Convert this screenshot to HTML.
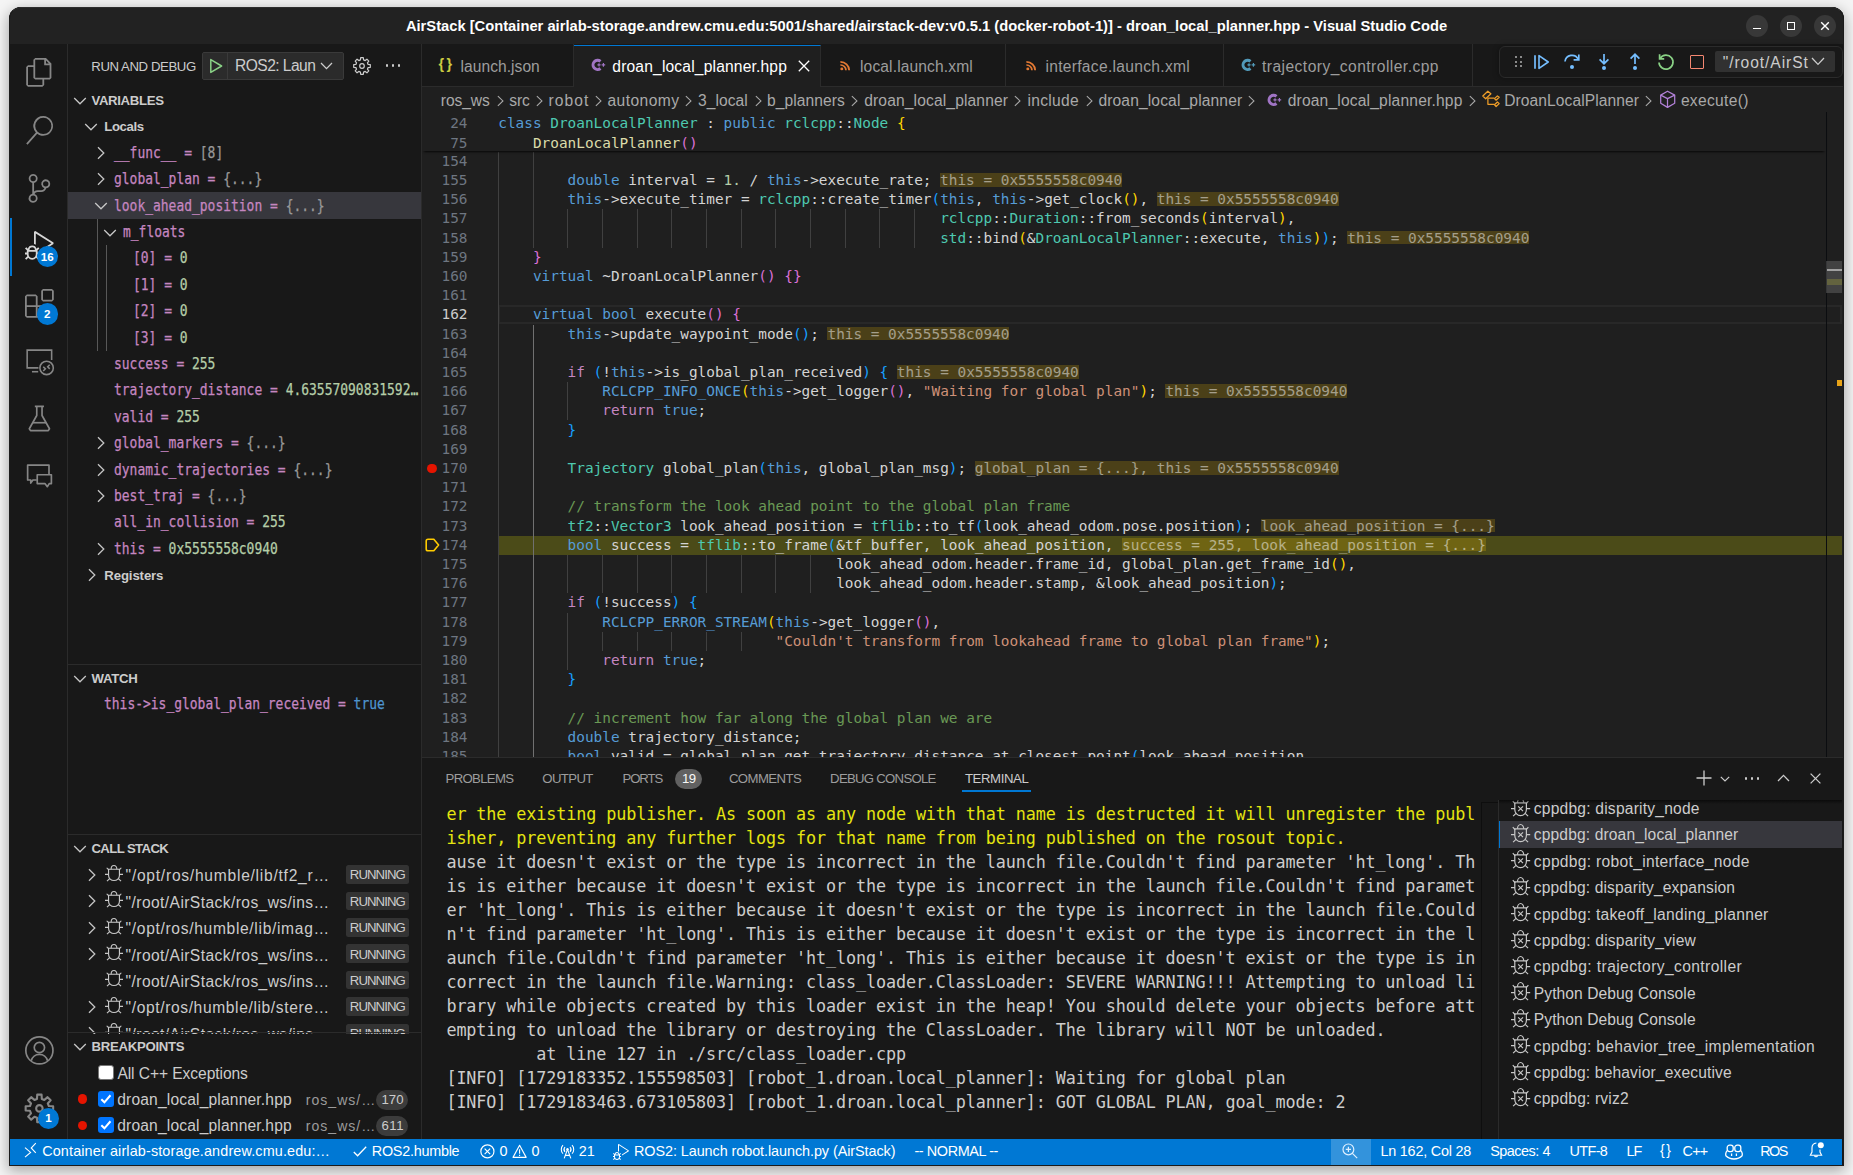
<!DOCTYPE html>
<html lang="en"><head><meta charset="utf-8"><title>AirStack - droan_local_planner.hpp - Visual Studio Code</title>
<style>
*{box-sizing:border-box;margin:0;padding:0}
html,body{width:1853px;height:1175px;overflow:hidden}
body{background:#f4f4f4;font-family:"Liberation Sans",sans-serif;color:#ccc;position:relative}
#shadow{position:absolute;left:9px;top:7px;width:1835px;height:1159px;border-radius:12px 12px 0 0;box-shadow:0 4px 14px 1px rgba(0,0,0,.32);background:#181818}
#win{position:absolute;left:9px;top:7px;width:1835px;height:1159px;border-radius:12px 12px 0 0;overflow:hidden;background:#181818}
#w{position:absolute;left:-9px;top:-7px;width:1853px;height:1175px}
.abs{position:absolute}
.t{position:absolute;white-space:pre;line-height:1}
svg{position:absolute;overflow:visible}
.ui{font-family:"Liberation Sans",sans-serif}
.mono{font-family:"DejaVu Sans Mono",monospace}
.smono{font-family:"Liberation Mono",monospace}

.sh{position:absolute;white-space:pre;font-size:13.2px;font-weight:700;color:#ccc;line-height:16px;letter-spacing:-.35px}
.vr{position:absolute;white-space:pre;font-family:"DejaVu Sans Mono",monospace;font-size:15px;line-height:16px;color:#c586c0;transform:scaleX(.8638);transform-origin:0 0;-webkit-text-stroke:.25px currentColor}
.vr i{font-style:normal;color:#999}
.vr b{font-weight:400;color:#b5cea8}
.vr u{text-decoration:none;color:#4e94ce}
.lb{position:absolute;white-space:pre;font-size:15.6px;line-height:20px;color:#ccc;letter-spacing:.2px}
.run{position:absolute;left:346px;width:63px;height:18.5px;background:#333;border-radius:2.5px;color:#ccc;font-size:13.2px;line-height:18.5px;text-align:center;letter-spacing:-.45px}
.cnt{position:absolute;height:21.6px;border-radius:11px;background:#3c3c3c;color:#ccc;font-size:13.2px;line-height:21.6px;text-align:center}

.cl{position:absolute;left:498.3px;height:19.2px;line-height:19.2px;font-family:"DejaVu Sans Mono",monospace;font-size:14.4px;white-space:pre;color:#d4d4d4}
.ln{position:absolute;left:422px;width:45.5px;text-align:right;height:19.2px;line-height:19.2px;font-family:"DejaVu Sans Mono",monospace;font-size:14.4px;color:#6e7681}
.k{color:#569cd6}.ty{color:#4ec9b0}.c{color:#c586c0}.s{color:#ce9178}.m{color:#6a9955}.n{color:#b5cea8}.f{color:#dcdcaa}
.b1{color:#ffd700}.b2{color:#da70d6}.b3{color:#179fff}
.iv{display:inline-block;height:13.8px;line-height:15.6px;vertical-align:baseline;margin-left:8.6px;background:rgba(255,200,0,.2);color:rgba(255,255,255,.5)}
.ig{position:absolute;width:1px;background:#404040}
.tab{position:absolute;top:44px;height:43px;border-right:1px solid #2b2b2b}
.tabl{position:absolute;white-space:pre;font-size:15.6px;line-height:20px;top:56.5px;color:#9d9d9d;letter-spacing:.12px}
.bc{position:absolute;white-space:pre;font-size:15.6px;line-height:20px;top:90.5px;color:#a9a9a9;letter-spacing:.1px}

.pt{position:absolute;white-space:pre;font-size:13.2px;line-height:16px;top:771.2px;color:#9d9d9d;letter-spacing:-.62px}
.tl{position:absolute;left:446.4px;white-space:pre;font-family:"DejaVu Sans Mono",monospace;font-size:16.8px;letter-spacing:-.114px;line-height:24px;height:24px;color:#ccc}
.tr{position:absolute;left:1534px;white-space:pre;font-size:15.6px;line-height:20px;color:#ccc;letter-spacing:.28px}

.st{position:absolute;white-space:pre;font-size:14.4px;line-height:18px;top:1142px;color:#fff;letter-spacing:.3px}
</style></head>
<body>
<div id="shadow"></div>
<div id="win"><div id="w">
<div class="abs" style="left:9px;top:7px;width:1835px;height:37px;background:#222222"></div>
<div class="t ui" id="title" style="left:9px;width:1835px;top:19.3px;text-align:center;font-weight:700;font-size:14.73px;color:#fff">AirStack [Container airlab-storage.andrew.cmu.edu:5001/shared/airstack-dev:v0.5.1 (docker-robot-1)] - droan_local_planner.hpp - Visual Studio Code</div>
<div class="abs" style="left:1746px;top:15px;width:22px;height:22px;border-radius:50%;background:#383838"></div>
<div class="abs" style="left:1753px;top:28px;width:8px;height:1.4px;background:#fff"></div>
<div class="abs" style="left:1780px;top:15px;width:22px;height:22px;border-radius:50%;background:#383838"></div>
<div class="abs" style="left:1787px;top:22px;width:8px;height:8px;border:1.3px solid #fff"></div>
<div class="abs" style="left:1814px;top:15px;width:22px;height:22px;border-radius:50%;background:#383838"></div>
<svg style="left:1821px;top:22px" width="8" height="8" viewBox="0 0 8 8"><path d="M0.2 0.2L7.8 7.8M7.8 0.2L0.2 7.8" stroke="#fff" stroke-width="1.4" fill="none"/></svg>
<div class="abs" style="left:9px;top:44px;width:59px;height:1095px;background:#181818;border-right:1px solid #2b2b2b"></div>
<div class="abs" style="left:68px;top:44px;width:354px;height:1095px;background:#181818;border-right:1px solid #2b2b2b"></div>
<div class="abs" style="left:422px;top:44px;width:1422px;height:713px;background:#1f1f1f"></div>
<div class="abs" style="left:422px;top:44px;width:1422px;height:43px;background:#181818;border-bottom:1px solid #2b2b2b"></div>
<div class="abs" style="left:422px;top:757px;width:1422px;height:382px;background:#181818;border-top:1px solid #2b2b2b"></div>
<div class="abs" style="left:10px;top:1139px;width:1832.3px;height:26px;background:#0078d4"></div>
<svg style="left:24.7px;top:58.4px" width="28.8" height="28.8" viewBox="0 0 24 24"><path fill="#868686" fill-rule="evenodd" d="M17.5 0h-9L7 1.5V6H2.5L1 7.5v15.07L2.5 24h12.07L16 22.57V18h4.7l1.3-1.43V4.5L17.5 0zm0 2.12l2.38 2.38H17.5V2.12zm-3 20.38h-12v-15H7v9.07L8.5 18h6v4.5zm6-6h-12v-15H16V6h4.5v10.5z"/></svg>
<svg style="left:24.7px;top:116.0px" width="28.8" height="28.8" viewBox="0 0 24 24"><path fill="#868686" fill-rule="evenodd" d="M15.25 0a8.25 8.25 0 0 0-6.18 13.72L1 22.88l1.12 1.12 8.05-9.12A8.251 8.251 0 1 0 15.25.01V0zm0 15a6.75 6.75 0 1 1 0-13.5 6.75 6.75 0 0 1 0 13.5z"/></svg>
<svg style="left:24.7px;top:173.6px" width="28.8" height="28.8" viewBox="0 0 24 24"><path fill="#868686" fill-rule="evenodd" d="M21.007 8.222A3.738 3.738 0 0 0 15.045 5.2a3.737 3.737 0 0 0 1.156 6.583 2.988 2.988 0 0 1-2.668 1.67h-2.99a4.456 4.456 0 0 0-2.989 1.165V7.4a3.737 3.737 0 1 0-1.494 0v9.117a3.776 3.776 0 1 0 1.816.099 2.99 2.99 0 0 1 2.668-1.667h2.99a4.484 4.484 0 0 0 4.223-3.039 3.736 3.736 0 0 0 3.25-3.687zM4.565 3.738a2.242 2.242 0 1 1 4.484 0 2.242 2.242 0 0 1-4.484 0zm4.484 16.441a2.242 2.242 0 1 1-4.484 0 2.242 2.242 0 0 1 4.484 0zm8.221-9.715a2.242 2.242 0 1 1 0-4.485 2.242 2.242 0 0 1 0 4.485z"/></svg>
<div class="abs" style="left:10px;top:218px;width:2.4px;height:57.6px;background:#0078d4"></div>
<svg style="left:24.7px;top:231.2px" width="28.8" height="28.8" viewBox="0 0 24 24"><path fill="#d7d7d7" fill-rule="evenodd" d="M10.94 13.5l-1.32 1.32a3.73 3.73 0 0 0-7.24 0L1.06 13.5 0 14.56l1.72 1.72-.22.22V18H0v1.5h1.5v.08c.077.489.214.966.41 1.42L0 22.94 1.06 24l1.65-1.65A4.308 4.308 0 0 0 6 24a4.31 4.31 0 0 0 3.29-1.65L10.94 24 12 22.94 10.09 21c.198-.464.336-.951.41-1.45v-.1H12V18h-1.5v-1.5l-.22-.22L12 14.56l-1.06-1.06zM6 13.5a2.25 2.25 0 0 1 2.25 2.25h-4.5A2.25 2.25 0 0 1 6 13.5zm3 6a3.33 3.33 0 0 1-3 3 3.33 3.33 0 0 1-3-3v-2.25h6v2.25zm14.76-9.9v1.26L13.5 17.37V15.6l8.5-5.37L9 2v9.46a5.07 5.07 0 0 0-1.5-.72V.63L8.64 0l15.12 9.6z"/></svg>
<div class="abs" style="left:36.5px;top:245.6px;width:21.5px;height:21.5px;border-radius:50%;background:#0078d4"></div><div class="t ui" style="left:32.3px;width:30px;text-align:center;top:250.5px;font-size:11.6px;font-weight:700;color:#fff">16</div>
<svg style="left:24.7px;top:288.8px" width="28.8" height="28.8" viewBox="0 0 24 24"><path fill="#868686" fill-rule="evenodd" d="M13.5 1.5L15 0h7.5L24 1.5V9l-1.5 1.5H15L13.5 9V1.5zm1.5 0V9h7.5V1.5H15zM0 15V6l1.5-1.5H9L10.5 6v7.5H18l1.5 1.5v7.5L18 24H1.5L0 22.5V15zm9-1.5V6H1.5v7.5H9zM9 15H1.5v7.5H9V15zm1.5 7.5H18V15h-7.5v7.5z"/></svg>
<div class="abs" style="left:36.5px;top:303.2px;width:21.5px;height:21.5px;border-radius:50%;background:#0078d4"></div><div class="t ui" style="left:32.3px;width:30px;text-align:center;top:308.2px;font-size:11.6px;font-weight:700;color:#fff">2</div>
<svg style="left:24.9px;top:347.00000000000006px" width="28.8" height="28.8" viewBox="0 0 24 24"><g stroke="#868686" stroke-width="1.3" fill="none"><path d="M11.2 17.4H1.8V2.6H22.2V10.8"/><path d="M5.8 20.6H11"/><circle cx="18" cy="17.4" r="5.6"/><path d="M15.2 16.4L17 18.2L15.2 20M20.6 14.8L18.9 16.5L20.6 18.2"/></g></svg>
<svg style="left:25.0px;top:404.40000000000003px" width="28.8" height="28.8" viewBox="0 0 24 24"><g stroke="#868686" stroke-width="1.4" fill="none" stroke-linejoin="round"><path d="M8.2 2H15.8M9.8 2V9.6L3.6 20.6L4.6 22.2H19.4L20.4 20.6L14.2 9.6V2"/><path d="M6.4 15.6H17.6"/></g></svg>
<svg style="left:24.9px;top:461.6px" width="28.8" height="28.8" viewBox="0 0 24 24"><g stroke="#868686" stroke-width="1.4" fill="none" stroke-linejoin="round"><path d="M9.8 15H6.6L4.8 17.6V15H2.2V2.6H20V10"/><path d="M10.2 10.6H22V18H20.2L18.6 20.6L16.6 18H10.2Z"/></g></svg>
<svg style="left:24.700000000000003px;top:1036.1999999999998px" width="28.8" height="28.8" viewBox="0 0 24 24"><g stroke="#868686" stroke-width="1.4" fill="none"><circle cx="12" cy="12" r="11.3"/><circle cx="12" cy="9.6" r="4.3"/><path d="M5.2 20.6A7 7 0 0 1 18.8 20.6"/></g></svg>
<svg style="left:24.700000000000003px;top:1094.3999999999999px" width="28.8" height="28.8" viewBox="0 0 24 24"><g stroke="#868686" stroke-width="1.75" fill="none" stroke-linejoin="round"><path d="M10.19 0.54L13.81 0.54L14.01 4.15L16.12 5.03L18.82 2.62L21.38 5.18L18.97 7.88L19.85 9.99L23.46 10.19L23.46 13.81L19.85 14.01L18.97 16.12L21.38 18.82L18.82 21.38L16.12 18.97L14.01 19.85L13.81 23.46L10.19 23.46L9.99 19.85L7.88 18.97L5.18 21.38L2.62 18.82L5.03 16.12L4.15 14.01L0.54 13.81L0.54 10.19L4.15 9.99L5.03 7.88L2.62 5.18L5.18 2.62L7.88 5.03L9.99 4.15Z"/><circle cx="12" cy="12" r="2.7"/></g></svg>
<div class="abs" style="left:37.9px;top:1107.5px;width:21.5px;height:21.5px;border-radius:50%;background:#0078d4"></div><div class="t ui" style="left:33.6px;width:30px;text-align:center;top:1112.4px;font-size:11.6px;font-weight:700;color:#fff">1</div>
<div class="t ui" style="left:91.3px;top:60px;font-size:13.2px;color:#ccc;letter-spacing:-.42px">RUN AND DEBUG</div>
<div class="abs" style="left:202px;top:52px;width:142px;height:27.6px;background:#2b2b2b;border:1px solid #3a3a3a;border-radius:2px"></div>
<div class="abs" style="left:227px;top:53px;width:1px;height:25.6px;background:#3a3a3a"></div>
<svg style="left:209px;top:58px" width="15" height="16" viewBox="0 0 15 16"><path d="M1.8 1.6L12.6 8L1.8 14.4Z" stroke="#89d185" stroke-width="1.5" fill="none" stroke-linejoin="round"/></svg>
<div class="t ui" style="left:235px;top:57.8px;font-size:15.6px;color:#ccc;letter-spacing:-.55px">ROS2: Laun</div>
<svg style="left:320px;top:62px" width="13" height="8" viewBox="0 0 13 8"><path d="M1 1L6.5 6.6L12 1" stroke="#ccc" stroke-width="1.3" fill="none"/></svg>
<svg style="left:353px;top:56.5px" width="18" height="18" viewBox="0 0 18 18"><g stroke="#ccc" stroke-width="1.2" fill="none" stroke-linejoin="round"><path d="M7.69 0.70L10.31 0.70L10.57 2.90L12.21 3.58L13.94 2.20L15.80 4.06L14.42 5.79L15.10 7.43L17.30 7.69L17.30 10.31L15.10 10.57L14.42 12.21L15.80 13.94L13.94 15.80L12.21 14.42L10.57 15.10L10.31 17.30L7.69 17.30L7.43 15.10L5.79 14.42L4.06 15.80L2.20 13.94L3.58 12.21L2.90 10.57L0.70 10.31L0.70 7.69L2.90 7.43L3.58 5.79L2.20 4.06L4.06 2.20L5.79 3.58L7.43 2.90Z"/><circle cx="9" cy="9" r="2.3"/></g></svg>
<div class="abs" style="left:385.5px;top:64.2px;width:2.4px;height:2.4px;border-radius:50%;background:#ccc"></div>
<div class="abs" style="left:391.7px;top:64.2px;width:2.4px;height:2.4px;border-radius:50%;background:#ccc"></div>
<div class="abs" style="left:397.9px;top:64.2px;width:2.4px;height:2.4px;border-radius:50%;background:#ccc"></div>
<svg style="left:72.7px;top:96.8px" width="14" height="8" viewBox="0 0 14 8"><path d="M1.2 1L7 6.8L12.8 1" stroke="#c5c5c5" stroke-width="1.3" fill="none"/></svg>
<div class="t ui" style="left:91.4px;top:93.1px;font-size:13.2px;line-height:16px;color:#ccc;letter-spacing:-0.329px;font-weight:700;">VARIABLES</div>
<div class="abs" style="left:68px;top:192.4px;width:353px;height:26.4px;background:#37373d"></div>
<div class="abs" style="left:97px;top:218.8px;width:1px;height:132.0px;background:#585858"></div>
<div class="abs" style="left:106px;top:245.2px;width:1px;height:105.6px;background:#585858"></div>
<svg style="left:84px;top:122.9px" width="14" height="8" viewBox="0 0 14 8"><path d="M1.2 1L7 6.8L12.8 1" stroke="#c5c5c5" stroke-width="1.3" fill="none"/></svg>
<div class="t ui" style="left:104.3px;top:119.8px;font-size:13.2px;font-weight:700;color:#ccc;letter-spacing:-.4px">Locals</div>
<svg style="left:97px;top:145.8px" width="8" height="14" viewBox="0 0 8 14"><path d="M1 1.2L6.8 7L1 12.8" stroke="#c5c5c5" stroke-width="1.3" fill="none"/></svg>
<div class="vr" style="left:114px;top:144.8px">__func__ = <i>[8]</i></div>
<svg style="left:97px;top:172.2px" width="8" height="14" viewBox="0 0 8 14"><path d="M1 1.2L6.8 7L1 12.8" stroke="#c5c5c5" stroke-width="1.3" fill="none"/></svg>
<div class="vr" style="left:114px;top:171.2px">global_plan = <i>{...}</i></div>
<svg style="left:94px;top:202.1px" width="14" height="8" viewBox="0 0 14 8"><path d="M1.2 1L7 6.8L12.8 1" stroke="#c5c5c5" stroke-width="1.3" fill="none"/></svg>
<div class="vr" style="left:114px;top:197.6px">look_ahead_position = <i>{...}</i></div>
<svg style="left:103px;top:228.5px" width="14" height="8" viewBox="0 0 14 8"><path d="M1.2 1L7 6.8L12.8 1" stroke="#c5c5c5" stroke-width="1.3" fill="none"/></svg>
<div class="vr" style="left:123.3px;top:224.0px">m_floats</div>
<div class="vr" style="left:133px;top:250.4px">[0] = <b>0</b></div>
<div class="vr" style="left:133px;top:276.8px">[1] = <b>0</b></div>
<div class="vr" style="left:133px;top:303.2px">[2] = <b>0</b></div>
<div class="vr" style="left:133px;top:329.6px">[3] = <b>0</b></div>
<div class="vr" style="left:114px;top:356.0px">success = <b>255</b></div>
<div class="vr" style="left:114px;top:382.4px">trajectory_distance = <b>4.63557090831592…</b></div>
<div class="vr" style="left:114px;top:408.8px">valid = <b>255</b></div>
<svg style="left:97px;top:436.19999999999993px" width="8" height="14" viewBox="0 0 8 14"><path d="M1 1.2L6.8 7L1 12.8" stroke="#c5c5c5" stroke-width="1.3" fill="none"/></svg>
<div class="vr" style="left:114px;top:435.2px">global_markers = <i>{...}</i></div>
<svg style="left:97px;top:462.6px" width="8" height="14" viewBox="0 0 8 14"><path d="M1 1.2L6.8 7L1 12.8" stroke="#c5c5c5" stroke-width="1.3" fill="none"/></svg>
<div class="vr" style="left:114px;top:461.6px">dynamic_trajectories = <i>{...}</i></div>
<svg style="left:97px;top:489.0px" width="8" height="14" viewBox="0 0 8 14"><path d="M1 1.2L6.8 7L1 12.8" stroke="#c5c5c5" stroke-width="1.3" fill="none"/></svg>
<div class="vr" style="left:114px;top:488.0px">best_traj = <i>{...}</i></div>
<div class="vr" style="left:114px;top:514.4px">all_in_collision = <b>255</b></div>
<svg style="left:97px;top:541.8px" width="8" height="14" viewBox="0 0 8 14"><path d="M1 1.2L6.8 7L1 12.8" stroke="#c5c5c5" stroke-width="1.3" fill="none"/></svg>
<div class="vr" style="left:114px;top:540.8px">this = <b>0x5555558c0940</b></div>
<svg style="left:88px;top:568.1999999999999px" width="8" height="14" viewBox="0 0 8 14"><path d="M1 1.2L6.8 7L1 12.8" stroke="#c5c5c5" stroke-width="1.3" fill="none"/></svg>
<div class="t ui" style="left:104.3px;top:568.6px;font-size:13.2px;font-weight:700;color:#ccc;letter-spacing:-.12px">Registers</div>
<div class="abs" style="left:68px;top:664.2px;width:353px;height:1px;background:#2b2b2b"></div>
<svg style="left:72.7px;top:674.8px" width="14" height="8" viewBox="0 0 14 8"><path d="M1.2 1L7 6.8L12.8 1" stroke="#c5c5c5" stroke-width="1.3" fill="none"/></svg>
<div class="t ui" style="left:91.4px;top:671.1px;font-size:13.2px;line-height:16px;color:#ccc;letter-spacing:-0.219px;font-weight:700;">WATCH</div>
<div class="vr" style="left:104.3px;top:696.4px">this-&gt;is_global_plan_received = <u>true</u></div>
<div class="abs" style="left:68px;top:834.2px;width:353px;height:1px;background:#2b2b2b"></div>
<svg style="left:72.7px;top:844.8px" width="14" height="8" viewBox="0 0 14 8"><path d="M1.2 1L7 6.8L12.8 1" stroke="#c5c5c5" stroke-width="1.3" fill="none"/></svg>
<div class="t ui" style="left:91.4px;top:841.1px;font-size:13.2px;line-height:16px;color:#ccc;letter-spacing:-0.615px;font-weight:700;">CALL STACK</div>
<div class="abs" style="left:68px;top:861px;width:353px;height:172.5px;overflow:hidden"><div class="abs" style="left:-68px;top:-861px;width:500px;height:1175px">
<svg style="left:87.9px;top:867.8px" width="8" height="14" viewBox="0 0 8 14"><path d="M1 1.2L6.8 7L1 12.8" stroke="#c5c5c5" stroke-width="1.3" fill="none"/></svg>
<svg style="left:104.9px;top:864.8px" width="18" height="16.3" viewBox="0 0 19.2 18.4" preserveAspectRatio="none"><g stroke="#c8c8c8" stroke-width="1.2" fill="none"><path d="M6.5 4.8A3.1 4.3 0 0 1 12.7 4.8"/><path d="M3.8 4.8H15.4V11.8A5.8 5.8 0 0 1 3.8 11.8Z"/><path d="M0 10.6H3.8M15.4 10.6H19.2M4.2 5.8L1.8 3.1M15 5.8L17.4 3.1M5 15.4L2.1 18.2M14.2 15.4L17.1 18.2"/></g></svg>
<div class="t ui" style="left:125.6px;top:866.3px;font-size:15.6px;line-height:20px;color:#ccc;letter-spacing:0.746px;">"/opt/ros/humble/lib/tf2_r…</div>
<div class="run" style="top:865.2px"></div>
<div class="t ui" style="left:349.8px;top:867.3px;font-size:13.2px;line-height:16px;color:#ccc;letter-spacing:-0.924px;">RUNNING</div>
<svg style="left:87.9px;top:894.1999999999999px" width="8" height="14" viewBox="0 0 8 14"><path d="M1 1.2L6.8 7L1 12.8" stroke="#c5c5c5" stroke-width="1.3" fill="none"/></svg>
<svg style="left:104.9px;top:891.2px" width="18" height="16.3" viewBox="0 0 19.2 18.4" preserveAspectRatio="none"><g stroke="#c8c8c8" stroke-width="1.2" fill="none"><path d="M6.5 4.8A3.1 4.3 0 0 1 12.7 4.8"/><path d="M3.8 4.8H15.4V11.8A5.8 5.8 0 0 1 3.8 11.8Z"/><path d="M0 10.6H3.8M15.4 10.6H19.2M4.2 5.8L1.8 3.1M15 5.8L17.4 3.1M5 15.4L2.1 18.2M14.2 15.4L17.1 18.2"/></g></svg>
<div class="t ui" style="left:125.6px;top:892.7px;font-size:15.6px;line-height:20px;color:#ccc;letter-spacing:0.415px;">"/root/AirStack/ros_ws/ins…</div>
<div class="run" style="top:891.6px"></div>
<div class="t ui" style="left:349.8px;top:893.7px;font-size:13.2px;line-height:16px;color:#ccc;letter-spacing:-0.924px;">RUNNING</div>
<svg style="left:87.9px;top:920.5999999999999px" width="8" height="14" viewBox="0 0 8 14"><path d="M1 1.2L6.8 7L1 12.8" stroke="#c5c5c5" stroke-width="1.3" fill="none"/></svg>
<svg style="left:104.9px;top:917.6px" width="18" height="16.3" viewBox="0 0 19.2 18.4" preserveAspectRatio="none"><g stroke="#c8c8c8" stroke-width="1.2" fill="none"><path d="M6.5 4.8A3.1 4.3 0 0 1 12.7 4.8"/><path d="M3.8 4.8H15.4V11.8A5.8 5.8 0 0 1 3.8 11.8Z"/><path d="M0 10.6H3.8M15.4 10.6H19.2M4.2 5.8L1.8 3.1M15 5.8L17.4 3.1M5 15.4L2.1 18.2M14.2 15.4L17.1 18.2"/></g></svg>
<div class="t ui" style="left:125.6px;top:919.1px;font-size:15.6px;line-height:20px;color:#ccc;letter-spacing:0.672px;">"/opt/ros/humble/lib/imag…</div>
<div class="run" style="top:918.0px"></div>
<div class="t ui" style="left:349.8px;top:920.1px;font-size:13.2px;line-height:16px;color:#ccc;letter-spacing:-0.924px;">RUNNING</div>
<svg style="left:87.9px;top:946.9999999999999px" width="8" height="14" viewBox="0 0 8 14"><path d="M1 1.2L6.8 7L1 12.8" stroke="#c5c5c5" stroke-width="1.3" fill="none"/></svg>
<svg style="left:104.9px;top:944.0px" width="18" height="16.3" viewBox="0 0 19.2 18.4" preserveAspectRatio="none"><g stroke="#c8c8c8" stroke-width="1.2" fill="none"><path d="M6.5 4.8A3.1 4.3 0 0 1 12.7 4.8"/><path d="M3.8 4.8H15.4V11.8A5.8 5.8 0 0 1 3.8 11.8Z"/><path d="M0 10.6H3.8M15.4 10.6H19.2M4.2 5.8L1.8 3.1M15 5.8L17.4 3.1M5 15.4L2.1 18.2M14.2 15.4L17.1 18.2"/></g></svg>
<div class="t ui" style="left:125.6px;top:945.5px;font-size:15.6px;line-height:20px;color:#ccc;letter-spacing:0.415px;">"/root/AirStack/ros_ws/ins…</div>
<div class="run" style="top:944.4px"></div>
<div class="t ui" style="left:349.8px;top:946.5px;font-size:13.2px;line-height:16px;color:#ccc;letter-spacing:-0.924px;">RUNNING</div>
<svg style="left:104.9px;top:970.4px" width="18" height="16.3" viewBox="0 0 19.2 18.4" preserveAspectRatio="none"><g stroke="#c8c8c8" stroke-width="1.2" fill="none"><path d="M6.5 4.8A3.1 4.3 0 0 1 12.7 4.8"/><path d="M3.8 4.8H15.4V11.8A5.8 5.8 0 0 1 3.8 11.8Z"/><path d="M0 10.6H3.8M15.4 10.6H19.2M4.2 5.8L1.8 3.1M15 5.8L17.4 3.1M5 15.4L2.1 18.2M14.2 15.4L17.1 18.2"/></g></svg>
<div class="t ui" style="left:125.6px;top:971.9px;font-size:15.6px;line-height:20px;color:#ccc;letter-spacing:0.415px;">"/root/AirStack/ros_ws/ins…</div>
<div class="run" style="top:970.8px"></div>
<div class="t ui" style="left:349.8px;top:972.9px;font-size:13.2px;line-height:16px;color:#ccc;letter-spacing:-0.924px;">RUNNING</div>
<svg style="left:87.9px;top:999.8px" width="8" height="14" viewBox="0 0 8 14"><path d="M1 1.2L6.8 7L1 12.8" stroke="#c5c5c5" stroke-width="1.3" fill="none"/></svg>
<svg style="left:104.9px;top:996.8px" width="18" height="16.3" viewBox="0 0 19.2 18.4" preserveAspectRatio="none"><g stroke="#c8c8c8" stroke-width="1.2" fill="none"><path d="M6.5 4.8A3.1 4.3 0 0 1 12.7 4.8"/><path d="M3.8 4.8H15.4V11.8A5.8 5.8 0 0 1 3.8 11.8Z"/><path d="M0 10.6H3.8M15.4 10.6H19.2M4.2 5.8L1.8 3.1M15 5.8L17.4 3.1M5 15.4L2.1 18.2M14.2 15.4L17.1 18.2"/></g></svg>
<div class="t ui" style="left:125.6px;top:998.3px;font-size:15.6px;line-height:20px;color:#ccc;letter-spacing:0.614px;">"/opt/ros/humble/lib/stere…</div>
<div class="run" style="top:997.2px"></div>
<div class="t ui" style="left:349.8px;top:999.3px;font-size:13.2px;line-height:16px;color:#ccc;letter-spacing:-0.924px;">RUNNING</div>
<svg style="left:87.9px;top:1026.2px" width="8" height="14" viewBox="0 0 8 14"><path d="M1 1.2L6.8 7L1 12.8" stroke="#c5c5c5" stroke-width="1.3" fill="none"/></svg>
<svg style="left:104.9px;top:1023.2px" width="18" height="16.3" viewBox="0 0 19.2 18.4" preserveAspectRatio="none"><g stroke="#c8c8c8" stroke-width="1.2" fill="none"><path d="M6.5 4.8A3.1 4.3 0 0 1 12.7 4.8"/><path d="M3.8 4.8H15.4V11.8A5.8 5.8 0 0 1 3.8 11.8Z"/><path d="M0 10.6H3.8M15.4 10.6H19.2M4.2 5.8L1.8 3.1M15 5.8L17.4 3.1M5 15.4L2.1 18.2M14.2 15.4L17.1 18.2"/></g></svg>
<div class="t ui" style="left:125.6px;top:1024.7px;font-size:15.6px;line-height:20px;color:#ccc;letter-spacing:0.415px;">"/root/AirStack/ros_ws/ins…</div>
<div class="run" style="top:1023.6px"></div>
<div class="t ui" style="left:349.8px;top:1025.7px;font-size:13.2px;line-height:16px;color:#ccc;letter-spacing:-0.924px;">RUNNING</div>
</div></div>
<div class="abs" style="left:68px;top:1032.4px;width:353px;height:1px;background:#2b2b2b"></div>
<svg style="left:72.7px;top:1043.0px" width="14" height="8" viewBox="0 0 14 8"><path d="M1.2 1L7 6.8L12.8 1" stroke="#c5c5c5" stroke-width="1.3" fill="none"/></svg>
<div class="t ui" style="left:91.4px;top:1039.3px;font-size:13.2px;line-height:16px;color:#ccc;letter-spacing:-0.278px;font-weight:700;">BREAKPOINTS</div>
<div class="abs" style="left:98.3px;top:1064.6px;width:15.6px;height:15.6px;background:#fff;border:1px solid #767676;border-radius:3px"></div>
<div class="t ui" style="left:117.4px;top:1063.5px;font-size:15.6px;line-height:20px;color:#ccc;letter-spacing:-0.074px;">All C++ Exceptions</div>
<div class="abs" style="left:77.6px;top:1094.1px;width:9.8px;height:9.8px;border-radius:50%;background:#e51400"></div>
<div class="abs" style="left:98.3px;top:1091.0px;width:15.6px;height:15.6px;background:#0075ff;border-radius:3px"></div>
<svg style="left:98.3px;top:1091.0px" width="15.6" height="15.6" viewBox="0 0 16 16"><path d="M3.4 8.4L6.6 11.6L12.8 4.4" stroke="#fff" stroke-width="2.1" fill="none"/></svg>
<div class="t ui" style="left:117.2px;top:1089.6px;font-size:15.6px;line-height:20px;color:#ccc;letter-spacing:0.168px;">droan_local_planner.hpp</div>
<div class="t ui" style="left:305.8px;top:1090.5px;font-size:14.04px;line-height:19px;color:#9b9b9b;letter-spacing:1.018px;">ros_ws/…</div>
<div class="cnt" style="left:376px;width:31.8px;top:1089.8px;height:20px"></div>
<div class="t ui" style="left:381.4px;top:1091.7px;font-size:13.2px;line-height:16px;color:#ccc;letter-spacing:0.092px;">170</div>
<div class="abs" style="left:77.6px;top:1120.5px;width:9.8px;height:9.8px;border-radius:50%;background:#e51400"></div>
<div class="abs" style="left:98.3px;top:1117.4px;width:15.6px;height:15.6px;background:#0075ff;border-radius:3px"></div>
<svg style="left:98.3px;top:1117.4px" width="15.6" height="15.6" viewBox="0 0 16 16"><path d="M3.4 8.4L6.6 11.6L12.8 4.4" stroke="#fff" stroke-width="2.1" fill="none"/></svg>
<div class="t ui" style="left:117.2px;top:1116.0px;font-size:15.6px;line-height:20px;color:#ccc;letter-spacing:0.168px;">droan_local_planner.hpp</div>
<div class="t ui" style="left:305.8px;top:1116.9px;font-size:14.04px;line-height:19px;color:#9b9b9b;letter-spacing:1.018px;">ros_ws/…</div>
<div class="cnt" style="left:376px;width:31.8px;top:1116.2px;height:20px"></div>
<div class="t ui" style="left:381.4px;top:1118.1px;font-size:13.2px;line-height:16px;color:#ccc;letter-spacing:0.584px;">611</div>
<div class="tab" style="left:422px;width:152px;"></div>
<div class="t ui" style="left:460.6px;top:57.1px;font-size:15.6px;line-height:20px;color:#9d9d9d;letter-spacing:0.031px;">launch.json</div>
<div class="t ui" style="left:438.4px;top:56.8px;font-size:14.4px;font-weight:700;color:#cbcb41;letter-spacing:2.4px">{}</div>
<div class="tab" style="left:574px;width:247px;background:#1f1f1f;border-top:1px solid #0078d4;top:44.5px;height:42.5px;"></div>
<div class="t ui" style="left:612.3px;top:57.1px;font-size:15.6px;line-height:20px;color:#fff;letter-spacing:0.172px;">droan_local_planner.hpp</div>
<svg style="left:591.0px;top:58px" width="16" height="14" viewBox="0 0 16 14"><path d="M9.5 3.3A4.6 4.6 0 1 0 9.5 10.5" stroke="#a074c4" stroke-width="3" fill="none"/><path d="M8 5.3v3.2M6.4 6.9h3.2M12.4 5.1v3.6M10.6 6.9h3.6" stroke="#a074c4" stroke-width="1.15" fill="none"/></svg>
<div class="tab" style="left:821px;width:185px;"></div>
<div class="t ui" style="left:860px;top:57.1px;font-size:15.6px;line-height:20px;color:#9d9d9d;letter-spacing:0.123px;">local.launch.xml</div>
<svg style="left:839.9px;top:60.7px" width="10.2" height="9.6" viewBox="0 0 13 13" preserveAspectRatio="none"><circle cx="2.3" cy="10.7" r="1.9" fill="#e37933"/><path d="M0.5 5.4A7 7 0 0 1 7.6 12.5M0.5 1.3A11.2 11.2 0 0 1 11.7 12.5" stroke="#e37933" stroke-width="2.3" fill="none"/></svg>
<div class="tab" style="left:1006px;width:217.5px;"></div>
<div class="t ui" style="left:1045.4px;top:57.1px;font-size:15.6px;line-height:20px;color:#9d9d9d;letter-spacing:0.301px;">interface.launch.xml</div>
<svg style="left:1025.7px;top:60.7px" width="10.2" height="9.6" viewBox="0 0 13 13" preserveAspectRatio="none"><circle cx="2.3" cy="10.7" r="1.9" fill="#e37933"/><path d="M0.5 5.4A7 7 0 0 1 7.6 12.5M0.5 1.3A11.2 11.2 0 0 1 11.7 12.5" stroke="#e37933" stroke-width="2.3" fill="none"/></svg>
<div class="tab" style="left:1223.5px;width:249.5px;"></div>
<div class="t ui" style="left:1262px;top:57.1px;font-size:15.6px;line-height:20px;color:#9d9d9d;letter-spacing:0.456px;">trajectory_controller.cpp</div>
<svg style="left:1241.2px;top:58px" width="16" height="14" viewBox="0 0 16 14"><path d="M9.5 3.3A4.6 4.6 0 1 0 9.5 10.5" stroke="#519aba" stroke-width="3" fill="none"/><path d="M8 5.3v3.2M6.4 6.9h3.2M12.4 5.1v3.6M10.6 6.9h3.6" stroke="#519aba" stroke-width="1.15" fill="none"/></svg>
<svg style="left:798px;top:60px" width="12" height="12" viewBox="0 0 12 12"><path d="M0.8 0.8L11.2 11.2M11.2 0.8L0.8 11.2" stroke="#fff" stroke-width="1.3" fill="none"/></svg>
<div class="t ui" style="left:440.8px;top:91.3px;font-size:15.6px;line-height:20px;color:#a9a9a9;letter-spacing:-0.081px;">ros_ws</div>
<div class="t ui" style="left:509.2px;top:91.3px;font-size:15.6px;line-height:20px;color:#a9a9a9;letter-spacing:-0.048px;">src</div>
<div class="t ui" style="left:548.4px;top:91.3px;font-size:15.6px;line-height:20px;color:#a9a9a9;letter-spacing:1.113px;">robot</div>
<div class="t ui" style="left:607.4px;top:91.3px;font-size:15.6px;line-height:20px;color:#a9a9a9;letter-spacing:0.459px;">autonomy</div>
<div class="t ui" style="left:698px;top:91.3px;font-size:15.6px;line-height:20px;color:#a9a9a9;letter-spacing:0.046px;">3_local</div>
<div class="t ui" style="left:766.9px;top:91.3px;font-size:15.6px;line-height:20px;color:#a9a9a9;letter-spacing:0.092px;">b_planners</div>
<div class="t ui" style="left:864.2px;top:91.3px;font-size:15.6px;line-height:20px;color:#a9a9a9;letter-spacing:0.137px;">droan_local_planner</div>
<div class="t ui" style="left:1027.6px;top:91.3px;font-size:15.6px;line-height:20px;color:#a9a9a9;letter-spacing:0.28px;">include</div>
<div class="t ui" style="left:1098.4px;top:91.3px;font-size:15.6px;line-height:20px;color:#a9a9a9;letter-spacing:0.137px;">droan_local_planner</div>
<div class="t ui" style="left:1287.7px;top:91.3px;font-size:15.6px;line-height:20px;color:#a9a9a9;letter-spacing:0.177px;">droan_local_planner.hpp</div>
<div class="t ui" style="left:1504.2px;top:91.3px;font-size:15.6px;line-height:20px;color:#a9a9a9;letter-spacing:0.081px;">DroanLocalPlanner</div>
<div class="t ui" style="left:1680.9px;top:91.3px;font-size:15.6px;line-height:20px;color:#a9a9a9;letter-spacing:0.311px;">execute()</div>
<svg style="left:496.5px;top:94.5px" width="7" height="11.9" viewBox="0 0 8 14" preserveAspectRatio="none"><path d="M1 1.2L6.8 7L1 12.8" stroke="#a9a9a9" stroke-width="1.25" fill="none"/></svg>
<svg style="left:536.2px;top:94.5px" width="7" height="11.9" viewBox="0 0 8 14" preserveAspectRatio="none"><path d="M1 1.2L6.8 7L1 12.8" stroke="#a9a9a9" stroke-width="1.25" fill="none"/></svg>
<svg style="left:595.1px;top:94.5px" width="7" height="11.9" viewBox="0 0 8 14" preserveAspectRatio="none"><path d="M1 1.2L6.8 7L1 12.8" stroke="#a9a9a9" stroke-width="1.25" fill="none"/></svg>
<svg style="left:685.3px;top:94.5px" width="7" height="11.9" viewBox="0 0 8 14" preserveAspectRatio="none"><path d="M1 1.2L6.8 7L1 12.8" stroke="#a9a9a9" stroke-width="1.25" fill="none"/></svg>
<svg style="left:754.7px;top:94.5px" width="7" height="11.9" viewBox="0 0 8 14" preserveAspectRatio="none"><path d="M1 1.2L6.8 7L1 12.8" stroke="#a9a9a9" stroke-width="1.25" fill="none"/></svg>
<svg style="left:850.8px;top:94.5px" width="7" height="11.9" viewBox="0 0 8 14" preserveAspectRatio="none"><path d="M1 1.2L6.8 7L1 12.8" stroke="#a9a9a9" stroke-width="1.25" fill="none"/></svg>
<svg style="left:1014.0px;top:94.5px" width="7" height="11.9" viewBox="0 0 8 14" preserveAspectRatio="none"><path d="M1 1.2L6.8 7L1 12.8" stroke="#a9a9a9" stroke-width="1.25" fill="none"/></svg>
<svg style="left:1085.5px;top:94.5px" width="7" height="11.9" viewBox="0 0 8 14" preserveAspectRatio="none"><path d="M1 1.2L6.8 7L1 12.8" stroke="#a9a9a9" stroke-width="1.25" fill="none"/></svg>
<svg style="left:1247.9px;top:94.5px" width="7" height="11.9" viewBox="0 0 8 14" preserveAspectRatio="none"><path d="M1 1.2L6.8 7L1 12.8" stroke="#a9a9a9" stroke-width="1.25" fill="none"/></svg>
<svg style="left:1469.0px;top:94.5px" width="7" height="11.9" viewBox="0 0 8 14" preserveAspectRatio="none"><path d="M1 1.2L6.8 7L1 12.8" stroke="#a9a9a9" stroke-width="1.25" fill="none"/></svg>
<svg style="left:1645.4px;top:94.5px" width="7" height="11.9" viewBox="0 0 8 14" preserveAspectRatio="none"><path d="M1 1.2L6.8 7L1 12.8" stroke="#a9a9a9" stroke-width="1.25" fill="none"/></svg>
<svg style="left:1266.5px;top:93px" width="16" height="14" viewBox="0 0 16 14"><path d="M9.5 3.3A4.6 4.6 0 1 0 9.5 10.5" stroke="#a074c4" stroke-width="3" fill="none"/><path d="M8 5.3v3.2M6.4 6.9h3.2M12.4 5.1v3.6M10.6 6.9h3.6" stroke="#a074c4" stroke-width="1.15" fill="none"/></svg>
<svg style="left:1481px;top:90px" width="20" height="18" viewBox="0 0 20 18"><g stroke="#ee9d28" stroke-width="1.25" fill="none" stroke-linejoin="round"><path d="M1.8 6L6.8 1.2L9.9 3.8L4.7 8.8Z"/><path d="M6.9 8.1H13.4M6.9 8.1V14.3H13.4"/><path d="M13.5 8.6L16.4 5.9L18.2 7.3L15.1 10.2Z"/><path d="M13.5 14.8L16.4 12L18.2 13.6L15.1 16.5Z"/></g></svg>
<svg style="left:1660px;top:90px" width="16" height="19" viewBox="0 0 16 19"><g stroke="#b180d7" stroke-width="1.25" fill="none" stroke-linejoin="round"><path d="M7.5 1.2L14.7 5.1V13.2L7.5 17.4L.7 13.2V5.1Z"/><path d="M.7 5.1L7.5 8.6L14.7 5.1M7.5 8.6V17.4"/></g></svg>
<div class="abs" style="left:422px;top:112px;width:1420px;height:645px;overflow:hidden"><div class="abs" style="left:-422px;top:-112px;width:1853px;height:1175px">
<div class="abs" style="left:497.9px;top:305.3px;width:1344.1px;height:19.2px;border:2px solid #282828"></div>
<div class="abs" style="left:497.9px;top:535.7px;width:1344.1px;height:19.2px;background:rgba(255,255,0,.2)"></div>
<div class="ig" style="left:497.9px;top:151.7px;height:614.4px"></div>
<div class="ig" style="left:532.6px;top:151.7px;height:96.0px"></div>
<div class="ig" style="left:532.6px;top:324.5px;height:441.6px;background:#707070"></div>
<div class="ig" style="left:567.3px;top:382.1px;height:38.4px"></div>
<div class="ig" style="left:567.3px;top:554.9px;height:38.4px"></div>
<div class="ig" style="left:567.3px;top:612.5px;height:57.6px"></div>
<div class="ig" style="left:567.3px;top:209.3px;height:38.4px"></div>
<div class="ig" style="left:601.9px;top:209.3px;height:38.4px"></div>
<div class="ig" style="left:636.6px;top:209.3px;height:38.4px"></div>
<div class="ig" style="left:671.3px;top:209.3px;height:38.4px"></div>
<div class="ig" style="left:706.0px;top:209.3px;height:38.4px"></div>
<div class="ig" style="left:740.6px;top:209.3px;height:38.4px"></div>
<div class="ig" style="left:775.3px;top:209.3px;height:38.4px"></div>
<div class="ig" style="left:810.0px;top:209.3px;height:38.4px"></div>
<div class="ig" style="left:844.7px;top:209.3px;height:38.4px"></div>
<div class="ig" style="left:879.4px;top:209.3px;height:38.4px"></div>
<div class="ig" style="left:914.0px;top:209.3px;height:38.4px"></div>
<div class="ig" style="left:601.9px;top:554.9px;height:38.4px"></div>
<div class="ig" style="left:636.6px;top:554.9px;height:38.4px"></div>
<div class="ig" style="left:671.3px;top:554.9px;height:38.4px"></div>
<div class="ig" style="left:706.0px;top:554.9px;height:38.4px"></div>
<div class="ig" style="left:740.6px;top:554.9px;height:38.4px"></div>
<div class="ig" style="left:775.3px;top:554.9px;height:38.4px"></div>
<div class="ig" style="left:810.0px;top:554.9px;height:38.4px"></div>
<div class="ig" style="left:601.9px;top:631.7px;height:19.2px"></div>
<div class="ig" style="left:636.6px;top:631.7px;height:19.2px"></div>
<div class="ig" style="left:671.3px;top:631.7px;height:19.2px"></div>
<div class="ig" style="left:706.0px;top:631.7px;height:19.2px"></div>
<div class="ig" style="left:740.6px;top:631.7px;height:19.2px"></div>
<div class="ln" style="top:151.7px">154</div>
<div class="ln" style="top:170.9px">155</div>
<div class="cl" style="top:170.9px">        <span class="k">double</span> interval = <span class="n">1.</span> / <span class="k">this</span>-&gt;execute_rate;<span class="iv">this = 0x5555558c0940</span></div>
<div class="ln" style="top:190.1px">156</div>
<div class="cl" style="top:190.1px">        <span class="k">this</span>-&gt;execute_timer = <span class="ty">rclcpp</span>::create_timer<span class="b3">(</span><span class="k">this</span>, <span class="k">this</span>-&gt;get_clock<span class="b1">()</span>,<span class="iv">this = 0x5555558c0940</span></div>
<div class="ln" style="top:209.3px">157</div>
<div class="cl" style="top:209.3px">                                                   <span class="ty">rclcpp</span>::<span class="ty">Duration</span>::from_seconds<span class="b1">(</span>interval<span class="b1">)</span>,</div>
<div class="ln" style="top:228.5px">158</div>
<div class="cl" style="top:228.5px">                                                   <span class="ty">std</span>::bind<span class="b1">(</span>&amp;<span class="ty">DroanLocalPlanner</span>::execute, <span class="k">this</span><span class="b1">)</span><span class="b3">)</span>;<span class="iv">this = 0x5555558c0940</span></div>
<div class="ln" style="top:247.7px">159</div>
<div class="cl" style="top:247.7px">    <span class="b2">}</span></div>
<div class="ln" style="top:266.9px">160</div>
<div class="cl" style="top:266.9px">    <span class="k">virtual</span> ~DroanLocalPlanner<span class="b2">()</span> <span class="b2">{}</span></div>
<div class="ln" style="top:286.1px">161</div>
<div class="ln" style="top:305.3px;color:#ccc">162</div>
<div class="cl" style="top:305.3px">    <span class="k">virtual</span> <span class="k">bool</span> execute<span class="b2">()</span> <span class="b2">{</span></div>
<div class="ln" style="top:324.5px">163</div>
<div class="cl" style="top:324.5px">        <span class="k">this</span>-&gt;update_waypoint_mode<span class="b3">()</span>;<span class="iv">this = 0x5555558c0940</span></div>
<div class="ln" style="top:343.7px">164</div>
<div class="ln" style="top:362.9px">165</div>
<div class="cl" style="top:362.9px">        <span class="c">if</span> <span class="b3">(</span>!<span class="k">this</span>-&gt;is_global_plan_received<span class="b3">)</span> <span class="b3">{</span><span class="iv">this = 0x5555558c0940</span></div>
<div class="ln" style="top:382.1px">166</div>
<div class="cl" style="top:382.1px">            <span class="k">RCLCPP_INFO_ONCE</span><span class="b1">(</span><span class="k">this</span>-&gt;get_logger<span class="b2">()</span>, <span class="s">"Waiting for global plan"</span><span class="b1">)</span>;<span class="iv">this = 0x5555558c0940</span></div>
<div class="ln" style="top:401.3px">167</div>
<div class="cl" style="top:401.3px">            <span class="c">return</span> <span class="k">true</span>;</div>
<div class="ln" style="top:420.5px">168</div>
<div class="cl" style="top:420.5px">        <span class="b3">}</span></div>
<div class="ln" style="top:439.7px">169</div>
<div class="ln" style="top:458.9px">170</div>
<div class="cl" style="top:458.9px">        <span class="ty">Trajectory</span> global_plan<span class="b3">(</span><span class="k">this</span>, global_plan_msg<span class="b3">)</span>;<span class="iv">global_plan = {...}, this = 0x5555558c0940</span></div>
<div class="ln" style="top:478.1px">171</div>
<div class="ln" style="top:497.3px">172</div>
<div class="cl" style="top:497.3px">        <span class="m">// transform the look ahead point to the global plan frame</span></div>
<div class="ln" style="top:516.5px">173</div>
<div class="cl" style="top:516.5px">        <span class="ty">tf2</span>::<span class="ty">Vector3</span> look_ahead_position = <span class="ty">tflib</span>::to_tf<span class="b3">(</span>look_ahead_odom.pose.position<span class="b3">)</span>;<span class="iv">look_ahead_position = {...}</span></div>
<div class="ln" style="top:535.7px">174</div>
<div class="cl" style="top:535.7px">        <span class="k">bool</span> success = <span class="ty">tflib</span>::to_frame<span class="b3">(</span>&amp;tf_buffer, look_ahead_position,<span class="iv">success = 255, look_ahead_position = {...}</span></div>
<div class="ln" style="top:554.9px">175</div>
<div class="cl" style="top:554.9px">                                       look_ahead_odom.header.frame_id, global_plan.get_frame_id<span class="b1">()</span>,</div>
<div class="ln" style="top:574.1px">176</div>
<div class="cl" style="top:574.1px">                                       look_ahead_odom.header.stamp, &amp;look_ahead_position<span class="b3">)</span>;</div>
<div class="ln" style="top:593.3px">177</div>
<div class="cl" style="top:593.3px">        <span class="c">if</span> <span class="b3">(</span>!success<span class="b3">)</span> <span class="b3">{</span></div>
<div class="ln" style="top:612.5px">178</div>
<div class="cl" style="top:612.5px">            <span class="k">RCLCPP_ERROR_STREAM</span><span class="b1">(</span><span class="k">this</span>-&gt;get_logger<span class="b2">()</span>,</div>
<div class="ln" style="top:631.7px">179</div>
<div class="cl" style="top:631.7px">                                <span class="s">"Couldn't transform from lookahead frame to global plan frame"</span><span class="b1">)</span>;</div>
<div class="ln" style="top:650.9px">180</div>
<div class="cl" style="top:650.9px">            <span class="c">return</span> <span class="k">true</span>;</div>
<div class="ln" style="top:670.1px">181</div>
<div class="cl" style="top:670.1px">        <span class="b3">}</span></div>
<div class="ln" style="top:689.3px">182</div>
<div class="ln" style="top:708.5px">183</div>
<div class="cl" style="top:708.5px">        <span class="m">// increment how far along the global plan we are</span></div>
<div class="ln" style="top:727.7px">184</div>
<div class="cl" style="top:727.7px">        <span class="k">double</span> trajectory_distance;</div>
<div class="ln" style="top:746.9px">185</div>
<div class="cl" style="top:746.9px">        <span class="k">bool</span> valid = global_plan.get_trajectory_distance_at_closest_point<span class="b3">(</span>look_ahead_position,</div>
<div class="abs" style="left:427.3px;top:463.8px;width:9.4px;height:9.4px;border-radius:50%;background:#e51400"></div>
<svg style="left:425px;top:538.3px" width="15" height="14" viewBox="0 0 15 14"><path d="M3 1.2H8.8L13.6 7L8.8 12.8H3A1.8 1.8 0 0 1 1.2 11V3A1.8 1.8 0 0 1 3 1.2Z" stroke="#ffcc00" stroke-width="1.6" fill="none" stroke-linejoin="round"/></svg>
</div></div>
<div class="abs" style="left:422px;top:112px;width:1404px;height:39.2px;background:#1f1f1f;box-shadow:0 3.6px 2.4px -2.2px #000"></div>
<div class="ln" style="top:114.1px">24</div>
<div class="cl" style="top:114.1px"><span class="k">class</span> <span class="ty">DroanLocalPlanner</span> : <span class="k">public</span> <span class="ty">rclcpp</span>::<span class="ty">Node</span> <span class="b1">{</span></div>
<div class="ln" style="top:134.1px">75</div>
<div class="cl" style="top:134.1px">    <span class="f">DroanLocalPlanner</span><span class="b2">()</span></div>
<div class="abs" style="left:1826px;top:112px;width:1px;height:645px;background:#0b0d10"></div>
<div class="abs" style="left:1826px;top:261px;width:16px;height:32px;background:rgba(121,121,121,.4)"></div>
<div class="abs" style="left:1827px;top:269px;width:15px;height:2px;background:#a0a0a0"></div>
<div class="abs" style="left:1827px;top:279px;width:15px;height:6px;background:#63633f"></div>
<div class="abs" style="left:1837px;top:379.5px;width:5px;height:6px;background:#e8a317"></div>
<div class="abs" style="left:1499px;top:45.5px;width:343.6px;height:32px;background:#181818;border:1px solid #2b2b2b;border-radius:6px;box-shadow:0 0 6px rgba(0,0,0,.36)"></div>
<div class="abs" style="left:1515.0px;top:56.0px;width:2.2px;height:2.2px;background:#8a8a8a"></div>
<div class="abs" style="left:1519.5px;top:56.0px;width:2.2px;height:2.2px;background:#8a8a8a"></div>
<div class="abs" style="left:1515.0px;top:60.5px;width:2.2px;height:2.2px;background:#8a8a8a"></div>
<div class="abs" style="left:1519.5px;top:60.5px;width:2.2px;height:2.2px;background:#8a8a8a"></div>
<div class="abs" style="left:1515.0px;top:65.0px;width:2.2px;height:2.2px;background:#8a8a8a"></div>
<div class="abs" style="left:1519.5px;top:65.0px;width:2.2px;height:2.2px;background:#8a8a8a"></div>
<svg style="left:1532px;top:52px" width="20" height="20" viewBox="0 0 20 20"><path d="M3 3.2V16.8" stroke="#75beff" stroke-width="1.7" fill="none"/><path d="M7 3.6L16.2 10L7 16.4Z" stroke="#75beff" stroke-width="1.6" fill="none" stroke-linejoin="round"/></svg>
<svg style="left:1562px;top:52px" width="20" height="20" viewBox="0 0 20 20"><path d="M3 9.5A7 7 0 0 1 16.2 7.2" stroke="#75beff" stroke-width="1.7" fill="none"/><path d="M16.8 2.6V7.8H11.6" stroke="#75beff" stroke-width="1.7" fill="none"/><circle cx="10" cy="15" r="2" fill="#75beff"/></svg>
<svg style="left:1594px;top:52px" width="20" height="20" viewBox="0 0 20 20"><path d="M10 2V11.5M5.6 7.3L10 11.7L14.4 7.3" stroke="#75beff" stroke-width="1.7" fill="none"/><circle cx="10" cy="16" r="2" fill="#75beff"/></svg>
<svg style="left:1625px;top:52px" width="20" height="20" viewBox="0 0 20 20"><path d="M10 12V2.5M5.6 6.7L10 2.3L14.4 6.7" stroke="#75beff" stroke-width="1.7" fill="none"/><circle cx="10" cy="16" r="2" fill="#75beff"/></svg>
<svg style="left:1656px;top:52px" width="20" height="20" viewBox="0 0 20 20"><path d="M4.2 6.2A7 7 0 1 1 3 10.5" stroke="#89d185" stroke-width="1.7" fill="none"/><path d="M3.6 2.2V6.8H8.2" stroke="#89d185" stroke-width="1.7" fill="none"/></svg>
<div class="abs" style="left:1690px;top:55px;width:13.5px;height:13.5px;border:1.5px solid #f48771;border-radius:1px"></div>
<div class="abs" style="left:1715px;top:51px;width:120px;height:21px;background:#313131;border-radius:2px"></div>
<div class="t ui" style="left:1722.8px;top:52.6px;font-size:15.6px;line-height:20px;color:#ccc;letter-spacing:0.92px;">"/root/AirSt</div>
<svg style="left:1811px;top:57px" width="14" height="9" viewBox="0 0 14 9"><path d="M1 1L7 7.4L13 1" stroke="#ccc" stroke-width="1.3" fill="none"/></svg>
<div class="t ui" style="left:445.6px;top:770.7px;font-size:13.2px;line-height:16px;color:#9d9d9d;letter-spacing:-0.7px;">PROBLEMS</div>
<div class="t ui" style="left:542.3px;top:770.7px;font-size:13.2px;line-height:16px;color:#9d9d9d;letter-spacing:-0.624px;">OUTPUT</div>
<div class="t ui" style="left:622.4px;top:770.7px;font-size:13.2px;line-height:16px;color:#9d9d9d;letter-spacing:-1.051px;">PORTS</div>
<div class="t ui" style="left:728.9px;top:770.7px;font-size:13.2px;line-height:16px;color:#9d9d9d;letter-spacing:-0.591px;">COMMENTS</div>
<div class="t ui" style="left:830.1px;top:770.7px;font-size:13.2px;line-height:16px;color:#9d9d9d;letter-spacing:-0.73px;">DEBUG CONSOLE</div>
<div class="t ui" style="left:964.9px;top:770.7px;font-size:13.2px;line-height:16px;color:#ccc;letter-spacing:-0.398px;">TERMINAL</div>
<div class="abs" style="left:962.3px;top:790.4px;width:68.4px;height:1.2px;background:#0078d4"></div>
<div class="abs" style="left:675px;top:768.6px;width:27.2px;height:20.4px;border-radius:10.2px;background:#616161"></div>
<div class="t ui" style="left:682px;top:771.2px;font-size:13.2px;line-height:16px;color:#f8f8f8;letter-spacing:-0.472px;">19</div>
<svg style="left:1696px;top:770px" width="16" height="16" viewBox="0 0 16 16"><path d="M8 .5V15.5M.5 8H15.5" stroke="#ccc" stroke-width="1.3" fill="none"/></svg>
<svg style="left:1720px;top:775.5px" width="10" height="6" viewBox="0 0 10 6"><path d="M.8 .8L5 5L9.2 .8" stroke="#ccc" stroke-width="1.2" fill="none"/></svg>
<div class="abs" style="left:1744.5px;top:777.2px;width:2.4px;height:2.4px;border-radius:50%;background:#ccc"></div>
<div class="abs" style="left:1750.7px;top:777.2px;width:2.4px;height:2.4px;border-radius:50%;background:#ccc"></div>
<div class="abs" style="left:1756.9px;top:777.2px;width:2.4px;height:2.4px;border-radius:50%;background:#ccc"></div>
<svg style="left:1777px;top:774px" width="13" height="8" viewBox="0 0 13 8"><path d="M1 7L6.5 1.4L12 7" stroke="#ccc" stroke-width="1.3" fill="none"/></svg>
<svg style="left:1809.5px;top:773px" width="11" height="11" viewBox="0 0 11 11"><path d="M.6 .6L10.4 10.4M10.4 .6L.6 10.4" stroke="#ccc" stroke-width="1.3" fill="none"/></svg>
<div class="tl" style="top:801.8px;color:#e5e510">er the existing publisher. As soon as any node with that name is destructed it will unregister the publ</div>
<div class="tl" style="top:825.8px;color:#e5e510">isher, preventing any further logs for that name from being published on the rosout topic.</div>
<div class="tl" style="top:849.8px">ause it doesn't exist or the type is incorrect in the launch file.Couldn't find parameter 'ht_long'. Th</div>
<div class="tl" style="top:873.8px">is is either because it doesn't exist or the type is incorrect in the launch file.Couldn't find paramet</div>
<div class="tl" style="top:897.8px">er 'ht_long'. This is either because it doesn't exist or the type is incorrect in the launch file.Could</div>
<div class="tl" style="top:921.8px">n't find parameter 'ht_long'. This is either because it doesn't exist or the type is incorrect in the l</div>
<div class="tl" style="top:945.8px">aunch file.Couldn't find parameter 'ht_long'. This is either because it doesn't exist or the type is in</div>
<div class="tl" style="top:969.8px">correct in the launch file.Warning: class_loader.ClassLoader: SEVERE WARNING!!! Attempting to unload li</div>
<div class="tl" style="top:993.8px">brary while objects created by this loader exist in the heap! You should delete your objects before att</div>
<div class="tl" style="top:1017.8px">empting to unload the library or destroying the ClassLoader. The library will NOT be unloaded.</div>
<div class="tl" style="top:1041.8px">         at line 127 in ./src/class_loader.cpp</div>
<div class="tl" style="top:1065.8px">[INFO] [1729183352.155598503] [robot_1.droan.local_planner]: Waiting for global plan</div>
<div class="tl" style="top:1089.8px">[INFO] [1729183463.673105803] [robot_1.droan.local_planner]: GOT GLOBAL PLAN, goal_mode: 2</div>
<div class="abs" style="left:1481px;top:802px;width:17px;height:337px;background:#181818;border-top:1px solid #0e0e0e;border-left:1px solid #0e0e0e"></div>
<div class="abs" style="left:1498px;top:800px;width:1px;height:339px;background:#2b2b2b"></div>
<div class="abs" style="left:1499px;top:800px;width:343px;height:339px;overflow:hidden"><div class="abs" style="left:-1499px;top:-800px;width:1853px;height:1175px">
<div class="abs" style="left:1499px;top:821.4px;width:343px;height:26.4px;background:#37373d;border-left:1px solid #0078d4"></div>
<svg style="left:1510.8px;top:797.5px" width="19.2" height="18.4" viewBox="0 0 19.2 18.4" preserveAspectRatio="none"><g stroke="#c8c8c8" stroke-width="1.2" fill="none"><path d="M6.5 4.8A3.1 4.3 0 0 1 12.7 4.8"/><path d="M3.8 4.8H15.4V11.8A5.8 5.8 0 0 1 3.8 11.8Z"/><path d="M0 10.6H3.8M15.4 10.6H19.2M4.2 5.8L1.8 3.1M15 5.8L17.4 3.1M5 15.4L2.1 18.2M14.2 15.4L17.1 18.2"/><path d="M7.2 8.4L12 13.2M12 8.4L7.2 13.2"/></g></svg>
<div class="t ui" style="left:1533.8px;top:798.9px;font-size:15.6px;line-height:20px;color:#ccc;letter-spacing:0.211px;">cppdbg: disparity_node</div>
<svg style="left:1510.8px;top:823.9px" width="19.2" height="18.4" viewBox="0 0 19.2 18.4" preserveAspectRatio="none"><g stroke="#c8c8c8" stroke-width="1.2" fill="none"><path d="M6.5 4.8A3.1 4.3 0 0 1 12.7 4.8"/><path d="M3.8 4.8H15.4V11.8A5.8 5.8 0 0 1 3.8 11.8Z"/><path d="M0 10.6H3.8M15.4 10.6H19.2M4.2 5.8L1.8 3.1M15 5.8L17.4 3.1M5 15.4L2.1 18.2M14.2 15.4L17.1 18.2"/><path d="M7.2 8.4L12 13.2M12 8.4L7.2 13.2"/></g></svg>
<div class="t ui" style="left:1533.8px;top:825.3px;font-size:15.6px;line-height:20px;color:#ccc;letter-spacing:0.129px;">cppdbg: droan_local_planner</div>
<svg style="left:1510.8px;top:850.3px" width="19.2" height="18.4" viewBox="0 0 19.2 18.4" preserveAspectRatio="none"><g stroke="#c8c8c8" stroke-width="1.2" fill="none"><path d="M6.5 4.8A3.1 4.3 0 0 1 12.7 4.8"/><path d="M3.8 4.8H15.4V11.8A5.8 5.8 0 0 1 3.8 11.8Z"/><path d="M0 10.6H3.8M15.4 10.6H19.2M4.2 5.8L1.8 3.1M15 5.8L17.4 3.1M5 15.4L2.1 18.2M14.2 15.4L17.1 18.2"/><path d="M7.2 8.4L12 13.2M12 8.4L7.2 13.2"/></g></svg>
<div class="t ui" style="left:1533.8px;top:851.7px;font-size:15.6px;line-height:20px;color:#ccc;letter-spacing:0.31px;">cppdbg: robot_interface_node</div>
<svg style="left:1510.8px;top:876.7px" width="19.2" height="18.4" viewBox="0 0 19.2 18.4" preserveAspectRatio="none"><g stroke="#c8c8c8" stroke-width="1.2" fill="none"><path d="M6.5 4.8A3.1 4.3 0 0 1 12.7 4.8"/><path d="M3.8 4.8H15.4V11.8A5.8 5.8 0 0 1 3.8 11.8Z"/><path d="M0 10.6H3.8M15.4 10.6H19.2M4.2 5.8L1.8 3.1M15 5.8L17.4 3.1M5 15.4L2.1 18.2M14.2 15.4L17.1 18.2"/><path d="M7.2 8.4L12 13.2M12 8.4L7.2 13.2"/></g></svg>
<div class="t ui" style="left:1533.8px;top:878.1px;font-size:15.6px;line-height:20px;color:#ccc;letter-spacing:0.136px;">cppdbg: disparity_expansion</div>
<svg style="left:1510.8px;top:903.1px" width="19.2" height="18.4" viewBox="0 0 19.2 18.4" preserveAspectRatio="none"><g stroke="#c8c8c8" stroke-width="1.2" fill="none"><path d="M6.5 4.8A3.1 4.3 0 0 1 12.7 4.8"/><path d="M3.8 4.8H15.4V11.8A5.8 5.8 0 0 1 3.8 11.8Z"/><path d="M0 10.6H3.8M15.4 10.6H19.2M4.2 5.8L1.8 3.1M15 5.8L17.4 3.1M5 15.4L2.1 18.2M14.2 15.4L17.1 18.2"/><path d="M7.2 8.4L12 13.2M12 8.4L7.2 13.2"/></g></svg>
<div class="t ui" style="left:1533.8px;top:904.5px;font-size:15.6px;line-height:20px;color:#ccc;letter-spacing:0.283px;">cppdbg: takeoff_landing_planner</div>
<svg style="left:1510.8px;top:929.5px" width="19.2" height="18.4" viewBox="0 0 19.2 18.4" preserveAspectRatio="none"><g stroke="#c8c8c8" stroke-width="1.2" fill="none"><path d="M6.5 4.8A3.1 4.3 0 0 1 12.7 4.8"/><path d="M3.8 4.8H15.4V11.8A5.8 5.8 0 0 1 3.8 11.8Z"/><path d="M0 10.6H3.8M15.4 10.6H19.2M4.2 5.8L1.8 3.1M15 5.8L17.4 3.1M5 15.4L2.1 18.2M14.2 15.4L17.1 18.2"/><path d="M7.2 8.4L12 13.2M12 8.4L7.2 13.2"/></g></svg>
<div class="t ui" style="left:1533.8px;top:930.9px;font-size:15.6px;line-height:20px;color:#ccc;letter-spacing:0.206px;">cppdbg: disparity_view</div>
<svg style="left:1510.8px;top:955.9px" width="19.2" height="18.4" viewBox="0 0 19.2 18.4" preserveAspectRatio="none"><g stroke="#c8c8c8" stroke-width="1.2" fill="none"><path d="M6.5 4.8A3.1 4.3 0 0 1 12.7 4.8"/><path d="M3.8 4.8H15.4V11.8A5.8 5.8 0 0 1 3.8 11.8Z"/><path d="M0 10.6H3.8M15.4 10.6H19.2M4.2 5.8L1.8 3.1M15 5.8L17.4 3.1M5 15.4L2.1 18.2M14.2 15.4L17.1 18.2"/><path d="M7.2 8.4L12 13.2M12 8.4L7.2 13.2"/></g></svg>
<div class="t ui" style="left:1533.8px;top:957.3px;font-size:15.6px;line-height:20px;color:#ccc;letter-spacing:0.398px;">cppdbg: trajectory_controller</div>
<svg style="left:1510.8px;top:982.3px" width="19.2" height="18.4" viewBox="0 0 19.2 18.4" preserveAspectRatio="none"><g stroke="#c8c8c8" stroke-width="1.2" fill="none"><path d="M6.5 4.8A3.1 4.3 0 0 1 12.7 4.8"/><path d="M3.8 4.8H15.4V11.8A5.8 5.8 0 0 1 3.8 11.8Z"/><path d="M0 10.6H3.8M15.4 10.6H19.2M4.2 5.8L1.8 3.1M15 5.8L17.4 3.1M5 15.4L2.1 18.2M14.2 15.4L17.1 18.2"/><path d="M7.2 8.4L12 13.2M12 8.4L7.2 13.2"/></g></svg>
<div class="t ui" style="left:1533.8px;top:983.7px;font-size:15.6px;line-height:20px;color:#ccc;letter-spacing:0.074px;">Python Debug Console</div>
<svg style="left:1510.8px;top:1008.7px" width="19.2" height="18.4" viewBox="0 0 19.2 18.4" preserveAspectRatio="none"><g stroke="#c8c8c8" stroke-width="1.2" fill="none"><path d="M6.5 4.8A3.1 4.3 0 0 1 12.7 4.8"/><path d="M3.8 4.8H15.4V11.8A5.8 5.8 0 0 1 3.8 11.8Z"/><path d="M0 10.6H3.8M15.4 10.6H19.2M4.2 5.8L1.8 3.1M15 5.8L17.4 3.1M5 15.4L2.1 18.2M14.2 15.4L17.1 18.2"/><path d="M7.2 8.4L12 13.2M12 8.4L7.2 13.2"/></g></svg>
<div class="t ui" style="left:1533.8px;top:1010.1px;font-size:15.6px;line-height:20px;color:#ccc;letter-spacing:0.074px;">Python Debug Console</div>
<svg style="left:1510.8px;top:1035.1px" width="19.2" height="18.4" viewBox="0 0 19.2 18.4" preserveAspectRatio="none"><g stroke="#c8c8c8" stroke-width="1.2" fill="none"><path d="M6.5 4.8A3.1 4.3 0 0 1 12.7 4.8"/><path d="M3.8 4.8H15.4V11.8A5.8 5.8 0 0 1 3.8 11.8Z"/><path d="M0 10.6H3.8M15.4 10.6H19.2M4.2 5.8L1.8 3.1M15 5.8L17.4 3.1M5 15.4L2.1 18.2M14.2 15.4L17.1 18.2"/><path d="M7.2 8.4L12 13.2M12 8.4L7.2 13.2"/></g></svg>
<div class="t ui" style="left:1533.8px;top:1036.5px;font-size:15.6px;line-height:20px;color:#ccc;letter-spacing:0.325px;">cppdbg: behavior_tree_implementation</div>
<svg style="left:1510.8px;top:1061.5px" width="19.2" height="18.4" viewBox="0 0 19.2 18.4" preserveAspectRatio="none"><g stroke="#c8c8c8" stroke-width="1.2" fill="none"><path d="M6.5 4.8A3.1 4.3 0 0 1 12.7 4.8"/><path d="M3.8 4.8H15.4V11.8A5.8 5.8 0 0 1 3.8 11.8Z"/><path d="M0 10.6H3.8M15.4 10.6H19.2M4.2 5.8L1.8 3.1M15 5.8L17.4 3.1M5 15.4L2.1 18.2M14.2 15.4L17.1 18.2"/><path d="M7.2 8.4L12 13.2M12 8.4L7.2 13.2"/></g></svg>
<div class="t ui" style="left:1533.8px;top:1062.9px;font-size:15.6px;line-height:20px;color:#ccc;letter-spacing:0.148px;">cppdbg: behavior_executive</div>
<svg style="left:1510.8px;top:1087.9px" width="19.2" height="18.4" viewBox="0 0 19.2 18.4" preserveAspectRatio="none"><g stroke="#c8c8c8" stroke-width="1.2" fill="none"><path d="M6.5 4.8A3.1 4.3 0 0 1 12.7 4.8"/><path d="M3.8 4.8H15.4V11.8A5.8 5.8 0 0 1 3.8 11.8Z"/><path d="M0 10.6H3.8M15.4 10.6H19.2M4.2 5.8L1.8 3.1M15 5.8L17.4 3.1M5 15.4L2.1 18.2M14.2 15.4L17.1 18.2"/><path d="M7.2 8.4L12 13.2M12 8.4L7.2 13.2"/></g></svg>
<div class="t ui" style="left:1533.8px;top:1089.3px;font-size:15.6px;line-height:20px;color:#ccc;letter-spacing:0.171px;">cppdbg: rviz2</div>
</div></div>
<div class="abs" style="left:1499px;top:800px;width:343px;height:4px;background:linear-gradient(rgba(0,0,0,.55),rgba(0,0,0,0))"></div>
<div class="abs" style="left:1330.5px;top:1139px;width:40px;height:27px;background:rgba(255,255,255,.2)"></div>
<div class="t ui" style="left:42.2px;top:1142px;font-size:14.4px;line-height:18px;color:#fff;letter-spacing:0.136px;">Container airlab-storage.andrew.cmu.edu:…</div>
<div class="t ui" style="left:371.8px;top:1142px;font-size:14.4px;line-height:18px;color:#fff;letter-spacing:-0.259px;">ROS2.humble</div>
<div class="t ui" style="left:499.6px;top:1142px;font-size:14.4px;line-height:18px;color:#fff;letter-spacing:-0.016px;">0</div>
<div class="t ui" style="left:531.4px;top:1142px;font-size:14.4px;line-height:18px;color:#fff;letter-spacing:-0.016px;">0</div>
<div class="t ui" style="left:578.8px;top:1142px;font-size:14.4px;line-height:18px;color:#fff;letter-spacing:-0.016px;">21</div>
<div class="t ui" style="left:634px;top:1142px;font-size:14.4px;line-height:18px;color:#fff;letter-spacing:-0.065px;">ROS2: Launch robot.launch.py (AirStack)</div>
<div class="t ui" style="left:914.4px;top:1142px;font-size:14.4px;line-height:18px;color:#fff;letter-spacing:-0.382px;">-- NORMAL --</div>
<div class="t ui" style="left:1380.4px;top:1142px;font-size:14.4px;line-height:18px;color:#fff;letter-spacing:-0.202px;">Ln 162, Col 28</div>
<div class="t ui" style="left:1490.2px;top:1142px;font-size:14.4px;line-height:18px;color:#fff;letter-spacing:-0.475px;">Spaces: 4</div>
<div class="t ui" style="left:1569.6px;top:1142px;font-size:14.4px;line-height:18px;color:#fff;letter-spacing:-0.645px;">UTF-8</div>
<div class="t ui" style="left:1626.4px;top:1142px;font-size:14.4px;line-height:18px;color:#fff;letter-spacing:-0.797px;">LF</div>
<div class="t ui" style="left:1682.6px;top:1142px;font-size:14.4px;line-height:18px;color:#fff;letter-spacing:-0.852px;">C++</div>
<div class="t ui" style="left:1760.2px;top:1142px;font-size:14.4px;line-height:18px;color:#fff;letter-spacing:-1.494px;">ROS</div>
<svg style="left:24px;top:1142px" width="13" height="16" viewBox="0 0 13 16"><path d="M1 5.7L6.6 10.4L1 15.1M11.8 1.2L7.2 6L11.8 10.8" stroke="#fff" stroke-width="1.1" fill="none"/></svg>
<svg style="left:353px;top:1146px" width="14" height="11" viewBox="0 0 14 11"><path d="M.8 6L4.6 9.8L13.2 .8" stroke="#fff" stroke-width="1.3" fill="none"/></svg>
<svg style="left:480.2px;top:1144px" width="14.8" height="14.8" viewBox="0 0 14 14"><circle cx="7" cy="7" r="6.2" stroke="#fff" stroke-width="1.1" fill="none"/><path d="M4.4 4.4L9.6 9.6M9.6 4.4L4.4 9.6" stroke="#fff" stroke-width="1.1" fill="none"/></svg>
<svg style="left:512px;top:1144px" width="15.2" height="14.6" viewBox="0 0 15 14"><path d="M7.5 1L14 13H1Z" stroke="#fff" stroke-width="1.1" fill="none" stroke-linejoin="round"/><path d="M7.5 5V9.4M7.5 10.4V11.6" stroke="#fff" stroke-width="1.1"/></svg>
<svg style="left:559.5px;top:1144px" width="15" height="15" viewBox="0 0 15 15"><g stroke="#fff" stroke-width="1.1" fill="none"><path d="M3 1.2A6 6 0 0 0 3 9.6M12 1.2A6 6 0 0 1 12 9.6M5 3A3.6 3.6 0 0 0 5 7.8M10 3A3.6 3.6 0 0 1 10 7.8"/><path d="M7.5 5.4L4.2 14.4M7.5 5.4L10.8 14.4M5.4 11.4H9.6"/></g><circle cx="7.5" cy="5.2" r="1.2" fill="#fff"/></svg>
<svg style="left:613px;top:1144px" width="16" height="16" viewBox="0 0 24 24"><path fill="#fff" d="M10.94 13.5l-1.32 1.32a3.73 3.73 0 0 0-7.24 0L1.06 13.5 0 14.56l1.72 1.72-.22.22V18H0v1.5h1.5v.08c.077.489.214.966.41 1.42L0 22.94 1.06 24l1.65-1.65A4.308 4.308 0 0 0 6 24a4.31 4.31 0 0 0 3.29-1.65L10.94 24 12 22.94 10.09 21c.198-.464.336-.951.41-1.45v-.1H12V18h-1.5v-1.5l-.22-.22L12 14.56l-1.06-1.06zM6 13.5a2.25 2.25 0 0 1 2.25 2.25h-4.5A2.25 2.25 0 0 1 6 13.5zm3 6a3.33 3.33 0 0 1-3 3 3.33 3.33 0 0 1-3-3v-2.25h6v2.25zm14.76-9.9v1.26L13.5 17.37V15.6l8.5-5.37L9 2v9.46a5.07 5.07 0 0 0-1.5-.72V.63L8.64 0l15.12 9.6z"/></svg>
<svg style="left:1342px;top:1143px" width="16" height="16" viewBox="0 0 16 16"><g stroke="#dfefff" stroke-width="1.2" fill="none"><circle cx="6.4" cy="6.4" r="5.4"/><path d="M10.4 10.4L15.2 15.2M6.4 3.8V9M3.8 6.4H9"/></g></svg>
<div class="t ui" style="left:1660px;top:1143px;font-size:14px;color:#fff;letter-spacing:1.6px">{}</div>
<svg style="left:1724.5px;top:1143.5px" width="18" height="16" viewBox="0 0 18 16"><g stroke="#fff" stroke-width="1.3" fill="none"><rect x="2.2" y="1.2" width="6" height="6.4" rx="2.4"/><rect x="9.8" y="1.2" width="6" height="6.4" rx="2.4"/><path d="M2.4 6.4C.4 8 .6 11 .9 11.8C3 14 6 15 9 15S15 14 17.1 11.8C17.4 11 17.6 8 15.6 6.4"/><path d="M6.6 9.6V12M11.4 9.6V12"/></g></svg>
<svg style="left:1808px;top:1141.3px" width="18" height="18" viewBox="0 0 18 18"><g stroke="#fff" stroke-width="1.15" fill="none"><path d="M8.4 2A5 5 0 0 0 4 7V11L2.4 14.2H13.6L12 11V8.6"/><path d="M6.6 14.4A1.4 1.4 0 0 0 9.4 14.4"/></g><circle cx="12.8" cy="4.2" r="3" fill="#fff"/></svg>
<div class="abs" style="left:9px;top:7px;width:1835px;height:1159px;border-radius:12px 12px 0 0;border:1px solid #1b1b1b;border-top-color:#2e2e2e;pointer-events:none"></div>
</div></div>
</body></html>
